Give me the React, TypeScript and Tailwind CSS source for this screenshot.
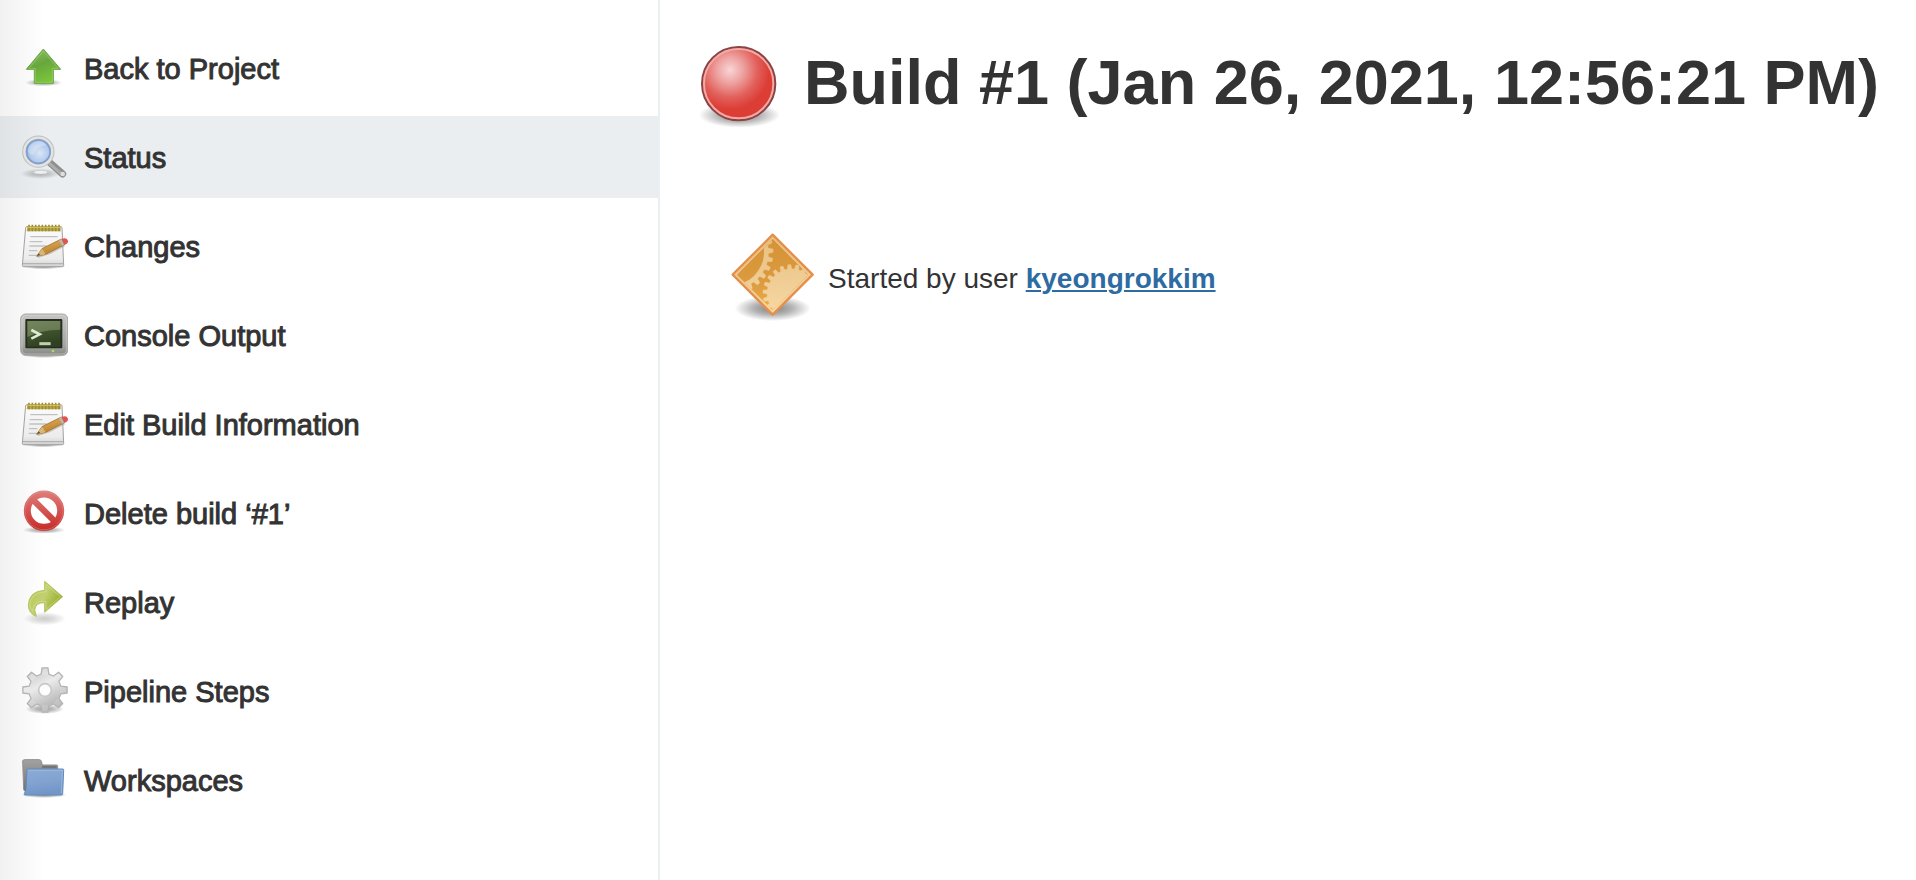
import React from "react";

function gearPath(cx: number, cy: number, root: number, tip: number, teeth: number, phase = 0): string {
  const step = (Math.PI * 2) / teeth;
  const at = (r: number, a: number) =>
    `${(cx + r * Math.cos(a)).toFixed(2)} ${(cy + r * Math.sin(a)).toFixed(2)}`;
  const parts: string[] = [];
  for (let i = 0; i < teeth; i++) {
    const a = phase + i * step;
    parts.push(
      at(root, a - step * 0.3),
      at(tip, a - step * 0.17),
      at(tip, a + step * 0.17),
      at(root, a + step * 0.3),
    );
  }
  return `M${parts.join(" L")} Z`;
}

function Shadow({ id, cx, cy, rx, ry, opacity = 0.4 }: { id: string; cx: number; cy: number; rx: number; ry: number; opacity?: number }) {
  return (
    <>
      <radialGradient id={id}>
        <stop offset="0" stopColor="#000" stopOpacity={opacity} />
        <stop offset="0.5" stopColor="#000" stopOpacity={opacity * 0.6} />
        <stop offset="1" stopColor="#000" stopOpacity="0" />
      </radialGradient>
      <ellipse cx={cx} cy={cy} rx={rx} ry={ry} fill={`url(#${id})`} />
    </>
  );
}

const iconClass = "size-12 shrink-0";

function UpIcon() {
  return (
    <svg className={iconClass} viewBox="60 72 144 144" aria-hidden="true">
      <Shadow id="up-sh" cx={131} cy={188} rx={56} ry={11} opacity={0.4} />
      <linearGradient id="up-g" x1="0.2" y1="0" x2="0.6" y2="1">
        <stop offset="0" stopColor="#8cc063" />
        <stop offset="0.45" stopColor="#68a63e" />
        <stop offset="1" stopColor="#7cc83a" />
      </linearGradient>
      <path d="M130 87 L182 148 H160 V190 H103 V148 H79 Z" fill="url(#up-g)" stroke="#6aa642" strokeWidth="3" strokeLinejoin="round" />
      <path d="M130 93 L174 145 H157 V187 H106 V145 H87 Z" fill="none" stroke="#a4d77d" strokeOpacity="0.5" strokeWidth="3" />
    </svg>
  );
}

function SearchIcon() {
  return (
    <svg className={iconClass} viewBox="60 339 144 144" aria-hidden="true">
      <Shadow id="se-sh" cx={122} cy={461} rx={60} ry={16} opacity={0.26} />
      <ellipse cx="122" cy="457" rx="20" ry="5" fill="#fff" opacity="0.75" />
      <path d="M146 425 L188 462" stroke="#8f8f8f" strokeWidth="21" strokeLinecap="round" />
      <path d="M148 430 L186 463" stroke="#adadad" strokeWidth="9" strokeLinecap="round" />
      <circle cx="188" cy="462" r="7" fill="#dedede" />
      <radialGradient id="se-g" cx="0.55" cy="0.55" r="0.55">
        <stop offset="0" stopColor="#d9e6f7" />
        <stop offset="0.65" stopColor="#b0c8ea" />
        <stop offset="1" stopColor="#83a8dc" />
      </radialGradient>
      <circle cx="115" cy="395" r="42" fill="url(#se-g)" stroke="#bdbdbb" strokeWidth="13" />
      <circle cx="115" cy="395" r="42" fill="none" stroke="#e4e4e2" strokeWidth="7" />
      <circle cx="115" cy="395" r="35" fill="none" stroke="#7f9fd0" strokeWidth="5" />
      <path d="M84 393 A31 31 0 0 1 140 376 Q110 377 101 402 Q93 410 84 393Z" fill="#fff" opacity="0.28" />
    </svg>
  );
}

function NotepadIcon({ id }: { id: string }) {
  return (
    <svg className={iconClass} viewBox="60 63 144 144" aria-hidden="true">
      <Shadow id={`${id}-sh`} cx={130} cy={195} rx={66} ry={10} opacity={0.5} />
      <linearGradient id={`${id}-p`} x1="0" y1="0" x2="0" y2="1">
        <stop offset="0" stopColor="#fbfbfb" />
        <stop offset="0.8" stopColor="#ececec" />
        <stop offset="1" stopColor="#d2d2d2" />
      </linearGradient>
      <linearGradient id={`${id}-w`} x1="0" y1="0" x2="0.4" y2="1">
        <stop offset="0" stopColor="#e6b768" />
        <stop offset="1" stopColor="#b87c28" />
      </linearGradient>
      <path d="M77 80 Q77 77 81 77 H182 Q186 77 186 80 L191 193 Q191 197 187 197 H71 Q67 197 67 193 Z" fill={`url(#${id}-p)`} stroke="#a2a2a0" strokeWidth="3" />
      <path d="M69 188 H190" stroke="#b4b4b4" strokeWidth="4" />
      <path d="M91 107 H173 M89 122 H127 M88 135 H140 M87 149 H112 M86 163 H115" stroke="#c1c1c1" strokeWidth="4" />
      <path d="M82 75 H182 V91 H80 Z" fill="#bdaa4a" />
      <path d="M87 71 V91 M97 71 V91 M107 71 V91 M117 71 V91 M127 71 V91 M137 71 V91 M147 71 V91 M157 71 V91 M167 71 V91 M177 71 V91" stroke="#9d8c30" strokeWidth="5" />
      <path d="M83 79 H181" stroke="#d3c676" strokeWidth="3" />
      <path d="M113 168 L150 156 L194 133" fill="none" stroke="#777" strokeOpacity="0.35" strokeWidth="6" />
      <path d="M110 166 L126 143 L184 114 L193 131 L137 160 Z" fill={`url(#${id}-w)`} stroke="#a4701d" strokeWidth="2.5" strokeLinejoin="round" />
      <path d="M110 166 L126 143 L131 150 L137 160 Z" fill="#d8b779" />
      <path d="M110 166 L116 157 L121 162 Z" fill="#665333" />
      <path d="M177 117 L185 113 L194 130 L186 135 Z" fill="#b9b9b5" />
      <path d="M184 114 Q200 108 204 119 Q206 127 193 132 Z" fill="#df5650" />
    </svg>
  );
}

function TerminalIcon() {
  return (
    <svg className={iconClass} viewBox="60 333 144 144" aria-hidden="true">
      <Shadow id="te-sh" cx={132} cy={463} rx={70} ry={11} opacity={0.55} />
      <linearGradient id="te-f" x1="0" y1="0" x2="0" y2="1">
        <stop offset="0" stopColor="#c6c7c4" />
        <stop offset="0.75" stopColor="#a4a6a2" />
        <stop offset="1" stopColor="#858783" />
      </linearGradient>
      <linearGradient id="te-s" x1="0" y1="0" x2="0.3" y2="1">
        <stop offset="0" stopColor="#53663e" />
        <stop offset="1" stopColor="#2f4120" />
      </linearGradient>
      <rect x="62" y="342" width="141" height="124" rx="15" fill="url(#te-f)" stroke="#a6a8a4" strokeWidth="3" />
      <rect x="66" y="346" width="133" height="116" rx="11" fill="none" stroke="#dcdcda" strokeOpacity="0.5" strokeWidth="3" />
      <rect x="76" y="357" width="111" height="88" rx="3" fill="#272d21" />
      <rect x="82" y="363" width="99" height="77" fill="url(#te-s)" />
      <path d="M82 363 H181 V389 Q120 390 82 411 Z" fill="#a2b385" opacity="0.42" />
      <path d="M94 390 L119 403 L94 416" fill="none" stroke="#dcead5" strokeWidth="8" />
      <path d="M118 431 H152" stroke="#bfd0b1" strokeWidth="9" />
      <circle cx="159" cy="453" r="4" fill="#a4e251" />
    </svg>
  );
}

function DeleteIcon() {
  return (
    <svg className={iconClass} viewBox="60 327 144 144" aria-hidden="true">
      <Shadow id="de-sh" cx={132} cy={450} rx={64} ry={11} opacity={0.4} />
      <linearGradient id="de-g" gradientUnits="userSpaceOnUse" x1="132" y1="331" x2="132" y2="453">
        <stop offset="0" stopColor="#dd7f7b" />
        <stop offset="0.5" stopColor="#d45552" />
        <stop offset="1" stopColor="#c62a26" />
      </linearGradient>
      <circle cx="132" cy="392" r="50" fill="#fff" stroke="url(#de-g)" strokeWidth="21" />
      <path d="M97 357 L167 427" stroke="url(#de-g)" strokeWidth="19" />
      <circle cx="132" cy="392" r="57" fill="none" stroke="#efaaa6" strokeOpacity="0.35" strokeWidth="3" />
    </svg>
  );
}

function ReplayIcon() {
  return (
    <svg className={iconClass} viewBox="60 51 144 144" aria-hidden="true">
      <Shadow id="re-sh" cx={134} cy={173} rx={64} ry={20} opacity={0.2} />
      <linearGradient id="re-g" x1="0" y1="0" x2="1" y2="0.5">
        <stop offset="0" stopColor="#b7ca58" />
        <stop offset="0.55" stopColor="#c2d070" />
        <stop offset="1" stopColor="#93aa27" />
      </linearGradient>
      <path d="M134 61 L188 107 L134 154 V125 Q106 124 104 147 L109 166 Q87 158 85 134 Q86 90 134 88 Z" fill="url(#re-g)" stroke="#b3c45e" strokeWidth="3" strokeLinejoin="round" />
      <path d="M138 70 L181 107 L138 145 V121 Q106 118 99 143 L98 151 Q89 142 89 132 Q92 94 138 92 Z" fill="none" stroke="#dce8a4" strokeOpacity="0.5" strokeWidth="3" />
    </svg>
  );
}

function GearIcon() {
  return (
    <svg className={iconClass} viewBox="60 318 144 144" aria-hidden="true">
      <Shadow id="ge-sh" cx={134} cy={444} rx={58} ry={15} opacity={0.4} />
      <linearGradient id="ge-g" x1="0.2" y1="0" x2="0.7" y2="1">
        <stop offset="0" stopColor="#d2d2d2" />
        <stop offset="0.35" stopColor="#ebebeb" />
        <stop offset="1" stopColor="#b8b8b8" />
      </linearGradient>
      <path d={gearPath(135, 387, 49, 67, 8, -Math.PI / 2)} fill="url(#ge-g)" stroke="#b4b4b4" strokeWidth="4" strokeLinejoin="round" />
      <circle cx="135" cy="387" r="46" fill="url(#ge-g)" />
      <circle cx="135" cy="387" r="19" fill="#fdfdfd" stroke="#c8c8c8" strokeWidth="5" />
    </svg>
  );
}

function FolderIcon() {
  return (
    <svg className={iconClass} viewBox="60 585 144 144" aria-hidden="true">
      <Shadow id="fo-sh" cx={132} cy={702} rx={68} ry={9} opacity={0.45} />
      <linearGradient id="fo-b" x1="0" y1="0" x2="0" y2="1">
        <stop offset="0" stopColor="#a2a2a2" />
        <stop offset="1" stopColor="#727272" />
      </linearGradient>
      <linearGradient id="fo-f" x1="0" y1="0" x2="0.2" y2="1">
        <stop offset="0" stopColor="#8aabd5" />
        <stop offset="0.55" stopColor="#82a3d0" />
        <stop offset="1" stopColor="#7196c8" />
      </linearGradient>
      <path d="M68 600 Q69 596 73 596 H118 Q123 596 124 601 L127 612 H170 Q173 612 173 616 V690 H76 Q72 690 71 686 Z" fill="url(#fo-b)" stroke="#8f8f8f" strokeWidth="3" />
      <path d="M126 618 H170" stroke="#757575" strokeWidth="7" />
      <path d="M81 626 Q81 624 84 624 H189 Q192 624 191 628 L188 698 Q188 702 184 702 H75 Q72 702 73 698 L78 686 Z" fill="url(#fo-f)" stroke="#6589bb" strokeWidth="3" />
      <path d="M84 628 H187 L184 698" fill="none" stroke="#b2c9e7" strokeOpacity="0.5" strokeWidth="3" />
    </svg>
  );
}

function BallIcon() {
  return (
    <svg className="size-24 shrink-0" viewBox="156 48 288 288" aria-hidden="true">
      <Shadow id="ba-sh" cx={298} cy={285} rx={122} ry={38} opacity={0.5} />
      <radialGradient id="ba-g" gradientUnits="userSpaceOnUse" cx="270" cy="150" r="118">
        <stop offset="0" stopColor="#f8d6d6" />
        <stop offset="0.35" stopColor="#eda09e" />
        <stop offset="0.7" stopColor="#e2605b" />
        <stop offset="1" stopColor="#dc3e36" />
      </radialGradient>
      <circle cx="296" cy="191" r="110" fill="url(#ba-g)" stroke="#8a4444" strokeWidth="6" />
      <circle cx="296" cy="191" r="104" fill="none" stroke="#f3a9a6" strokeWidth="6" />
    </svg>
  );
}

function CauseIcon() {
  return (
    <svg className="size-24 shrink-0" viewBox="12 18 288 288" aria-hidden="true">
      <Shadow id="ca-sh" cx={158} cy={250} rx={114} ry={38} opacity={0.5} />
      <linearGradient id="ca-d" gradientUnits="userSpaceOnUse" x1="158" y1="30" x2="158" y2="270">
        <stop offset="0" stopColor="#d59136" />
        <stop offset="0.6" stopColor="#dc9b3e" />
        <stop offset="1" stopColor="#f0b04c" />
      </linearGradient>
      <linearGradient id="ca-l" gradientUnits="userSpaceOnUse" x1="158" y1="30" x2="175" y2="270">
        <stop offset="0" stopColor="#e8bf7f" />
        <stop offset="0.5" stopColor="#eecb92" />
        <stop offset="1" stopColor="#f8d8a4" />
      </linearGradient>
      <clipPath id="ca-c">
        <path d="M158 42 L265 149 L158 256 L51 149 Z" />
      </clipPath>
      <path d="M158 29 L278 149 L158 269 L38 149 Z" fill="url(#ca-l)" stroke="#e58f4a" strokeWidth="7" strokeLinejoin="round" />
      <g clipPath="url(#ca-c)">
        <rect x="30" y="20" width="260" height="260" fill="url(#ca-d)" />
        <path d={gearPath(34, 82, 111, 125, 28, -0.04)} fill="url(#ca-l)" stroke="url(#ca-l)" strokeWidth="2" strokeLinejoin="round" />
        <circle cx="34" cy="82" r="98" fill="url(#ca-d)" />
        <path d={gearPath(215, 205, 73, 86, 22, 0.06)} fill="url(#ca-l)" stroke="url(#ca-l)" strokeWidth="2" strokeLinejoin="round" />
      </g>
    </svg>
  );
}

const tasks: { label: string; key: string; icon: React.ReactNode; current?: boolean }[] = [
  { key: "back", label: "Back to Project", icon: <UpIcon /> },
  { key: "status", label: "Status", icon: <SearchIcon />, current: true },
  { key: "changes", label: "Changes", icon: <NotepadIcon id="changes" /> },
  { key: "console", label: "Console Output", icon: <TerminalIcon /> },
  { key: "edit", label: "Edit Build Information", icon: <NotepadIcon id="edit" /> },
  { key: "delete", label: "Delete build ‘#1’", icon: <DeleteIcon /> },
  { key: "replay", label: "Replay", icon: <ReplayIcon /> },
  { key: "steps", label: "Pipeline Steps", icon: <GearIcon /> },
  { key: "workspaces", label: "Workspaces", icon: <FolderIcon /> },
];

export default function App() {
  return (
    <div className="flex min-h-screen bg-white font-['Liberation_Sans',Arial,sans-serif] text-[28px] leading-8 text-[#333]">
      <aside className="w-[34.45%] shrink-0 border-r-2 border-[#eaeff2] bg-linear-to-r from-[#f1f1f1] to-white to-[44px] pt-[27px]">
        <nav aria-label="Build">
          <ul className="flex flex-col gap-[7px]">
            {tasks.map((task) => (
              <li key={task.key}>
                <a
                  href={`#${task.key}`}
                  aria-current={task.current ? "page" : undefined}
                  className={
                    task.current
                      ? "flex h-[82px] items-center gap-4 bg-linear-to-r from-[#dfe3e5] to-[#eaeef1] to-[44px] px-5 text-[29px]"
                      : "flex h-[82px] items-center gap-4 px-5 text-[29px]"
                  }
                >
                  {task.icon}
                  <span className="pt-0.5 [-webkit-text-stroke:1px_#333]">{task.label}</span>
                </a>
              </li>
            ))}
          </ul>
        </nav>
      </aside>
      <main className="min-w-0 flex-1 pt-9 pl-8">
        <h1 className="flex items-center gap-4 text-[63px] leading-[72px] font-bold whitespace-nowrap">
          <BallIcon />
          <span className="pb-1">Build #1 (Jan 26, 2021, 12:56:21 PM)</span>
        </h1>
        <div className="mt-[99px] flex items-center gap-2 pl-8">
          <CauseIcon />
          <p>
            Started by user{" "}
            <a href="#user" className="font-bold text-[#2f6ba3] underline decoration-2 underline-offset-2">
              kyeongrokkim
            </a>
          </p>
        </div>
      </main>
    </div>
  );
}
